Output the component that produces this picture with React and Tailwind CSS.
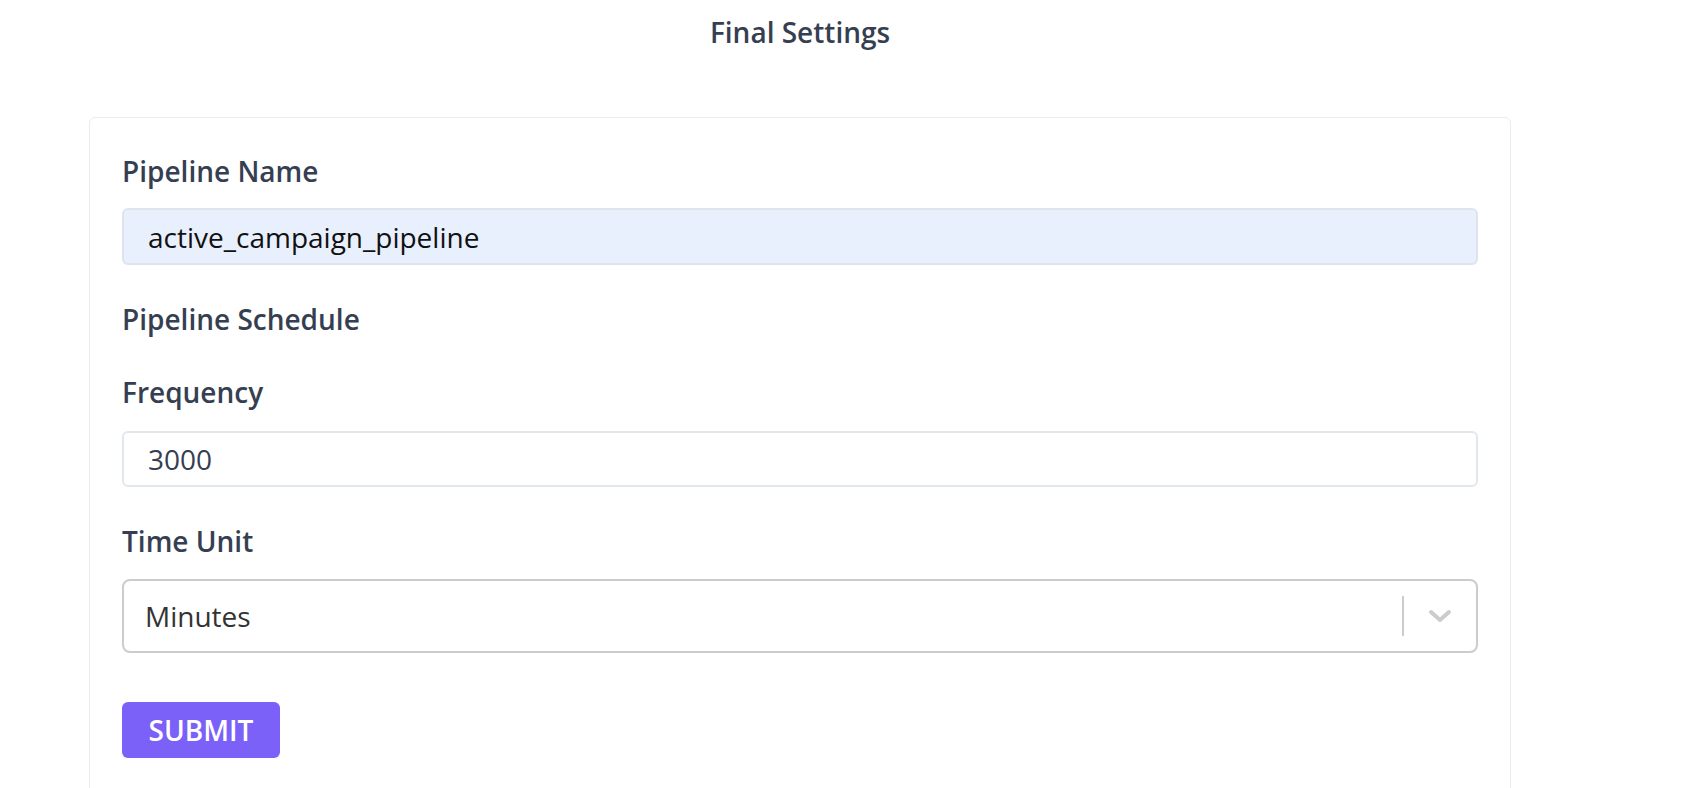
import React, { useState } from 'react'

const font = { fontFamily: '"Open Sans", "Noto Sans", sans-serif' }

const Label = ({ children, className = '' }) => (
    <div className={`text-[28px] leading-[38px] font-semibold text-[#363f52] ${className}`}>{children}</div>
)

export default function App() {
    const [name, setName] = useState('active_campaign_pipeline')
    const [freq, setFreq] = useState('3000')

    return (
        <div style={font} className="min-h-screen bg-white">
            <div className="ml-[89px] w-[1422px]">
                <h1 className="pt-[13px] text-center text-[28px] leading-[38px] font-semibold text-[#363f52]">Final Settings</h1>

                <div className="mt-[66px] border border-[#ebebf0] rounded-[6px] px-[32px] pt-[34px] pb-[40px]">
                    <Label>Pipeline Name</Label>
                    <input
                        value={name}
                        onChange={e => setName(e.target.value)}
                        className="mt-[18px] block w-full h-[57px] px-[24px] bg-[#e8f0fe] border-2 border-[#dfe4ec] rounded-[6px] text-[28px] text-[#111] outline-none"
                    />

                    <Label className="mt-[35px]">Pipeline Schedule</Label>

                    <Label className="mt-[35px]">Frequency</Label>
                    <input
                        value={freq}
                        onChange={e => setFreq(e.target.value)}
                        className="mt-[20px] block w-full h-[56px] px-[24px] bg-white border-2 border-[#e2e6ed] rounded-[6px] text-[28px] text-[#363f52] outline-none"
                    />

                    <Label className="mt-[35px]">Time Unit</Label>
                    <div className="mt-[19px] flex items-center h-[74px] border-2 border-[#cccccc] rounded-[8px] bg-white">
                        <span className="flex-1 pl-[21px] text-[28px] text-[#333333]">Minutes</span>
                        <span className="w-[2px] h-[40px] bg-[#cccccc]"></span>
                        <span className="w-[72px] flex justify-center">
                            <svg width="24" height="14" viewBox="0 0 24 14" fill="none">
                                <path d="M3 3l9 8 9-8" stroke="#cccccc" strokeWidth="4" strokeLinecap="round" strokeLinejoin="round" />
                            </svg>
                        </span>
                    </div>

                    <button className="mt-[49px] w-[158px] h-[56px] rounded-[6px] bg-[#7b61f8] text-white text-[28px] font-semibold">
                        SUBMIT
                    </button>
                </div>
            </div>
        </div>
    )
}
